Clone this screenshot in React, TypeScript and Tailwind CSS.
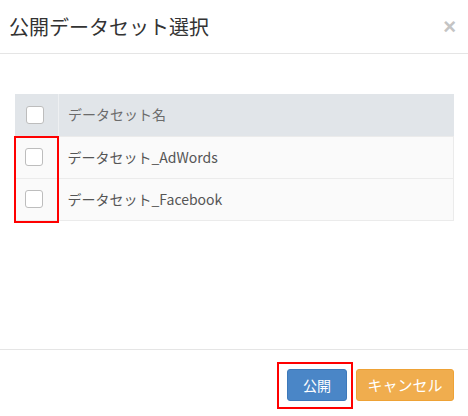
const rows = ['データセット_AdWords', 'データセット_Facebook'];

const Checkbox = () => (
    <span className="block w-[18px] h-[18px] rounded-[3px] border border-[#bdbdbd] bg-white" />
);

const App = () => {
    return (
        <div className="w-[468px] h-[416px] bg-white flex flex-col font-['Noto_Sans_CJK_JP','Noto_Sans',sans-serif]">
            {/* Header */}
            <div className="h-[54px] border-b border-[#e5e5e5] flex items-center justify-between pl-[9px] pr-[12px]">
                <h4 className="text-[20px] text-[#333] leading-none">公開データセット選択</h4>
                <span className="text-[#c4c4c4] text-[22px] font-bold leading-none font-['Liberation_Sans',sans-serif]">×</span>
            </div>

            {/* Body */}
            <div className="flex-1 pt-[40px] px-[14px]">
                <div className="relative">
                    <table className="w-full border-collapse text-[14px]">
                        <thead>
                            <tr className="h-[42px] bg-[#e1e5e9]">
                                <th className="w-[44px] pl-[11px] border-r border-[#eef0f2] align-middle">
                                    <Checkbox />
                                </th>
                                <th className="text-left font-normal text-[#6b6b6b] pl-[9px] align-middle">データセット名</th>
                            </tr>
                        </thead>
                        <tbody>
                            {rows.map((r) => (
                                <tr key={r} className="h-[42px] bg-[#fafafa] border-b border-x border-[#ebebeb]">
                                    <td className="pl-[10px] align-middle border-t border-[#ebebeb]">
                                        <Checkbox />
                                    </td>
                                    <td className="text-[#555] pl-[9px] align-middle border-t border-[#ebebeb]">{r}</td>
                                </tr>
                            ))}
                        </tbody>
                    </table>
                    <div className="absolute left-0 top-[42px] w-[45px] h-[87px] border-2 border-[#ff0000]" />
                </div>
            </div>

            {/* Footer */}
            <div className="h-[67px] border-t border-[#e5e5e5] flex justify-end items-start pt-[19px] pr-[14px] gap-[9px]">
                <div className="relative">
                    <button className="w-[60px] h-[32px] rounded-[3px] bg-[#4a86c7] border border-[#3d79ba] text-white text-[14px]">
                        公開
                    </button>
                    <div className="absolute left-[-10px] right-[-6px] top-[-7px] bottom-[-8px] border-2 border-[#ff0000]" />
                </div>
                <button className="w-[98px] h-[32px] rounded-[3px] bg-[#f0ad4e] border border-[#eea236] text-white text-[15px]">
                    キャンセル
                </button>
            </div>
        </div>
    );
};

export default App;
